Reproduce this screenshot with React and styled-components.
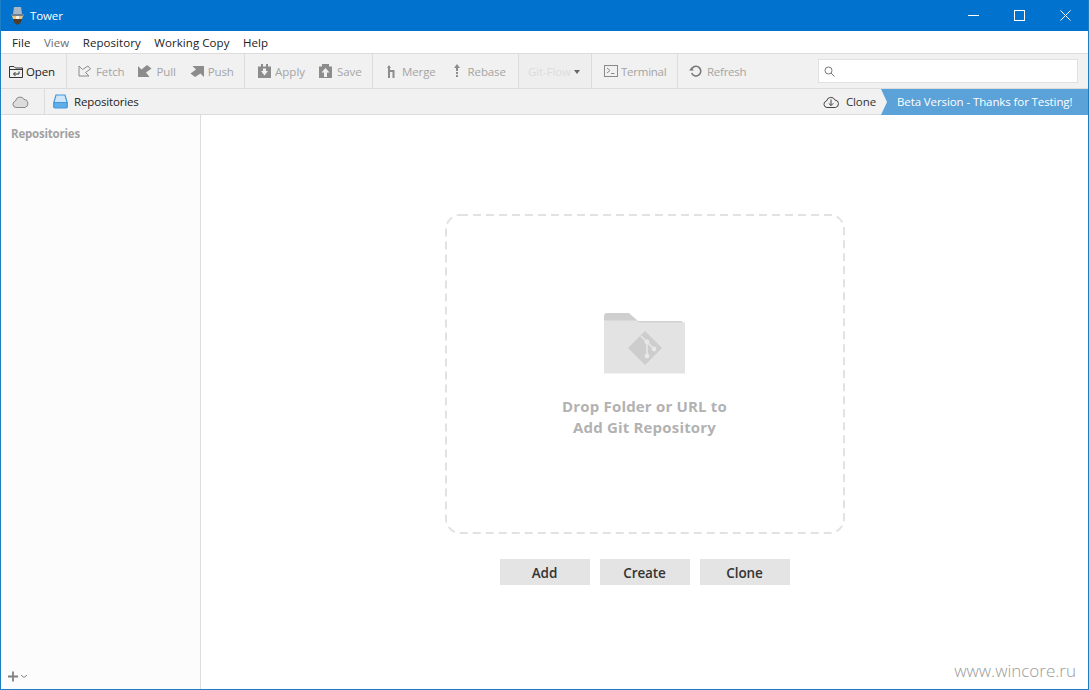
import React from "react";
import styled, { createGlobalStyle } from "styled-components";

const Global = createGlobalStyle`
  html, body { margin: 0; padding: 0; background: #fff; }
  body { font-family: "Open Sans", "Noto Sans", "Liberation Sans", sans-serif; }
  * { box-sizing: border-box; }
`;
const Window = styled.div`
  position: relative; width: 1089px; height: 690px; display: flex; flex-direction: column;
  border: 1px solid #1f7fc4; border-top: 0; overflow: hidden; background: #fff;
`;
const TitleBar = styled.div`
  flex: 0 0 31px; margin: 0 -1px; background: #0173cf; display: flex; align-items: center;
  padding-left: 10px; color: #fff;
`;
const TitleText = styled.span`
  font-size: 11.5px; margin-left: 5px; letter-spacing: -0.1px;
`;
const WindowButtons = styled.div`margin-left: auto; display: flex; height: 100%; padding-right: 1px;`;
const WindowButton = styled.div`width: 46px; display: flex; align-items: center; justify-content: center;`;
const MenuBar = styled.div`
  flex: 0 0 22px; display: flex; align-items: center; gap: 13.5px; padding-left: 11px; background: #fff;
`;
const MenuItem = styled.span`
  font-size: 11.5px; letter-spacing: 0.06px; color: ${p => (p.$dim ? "#6e6e6e" : "#222")};
`;
const Toolbar = styled.div`
  flex: 0 0 36px; display: flex; align-items: stretch; background: #f1f1f1;
  border-top: 1px solid #dcdcdc; border-bottom: 1px solid #dcdcdc;
`;
const Group = styled.div`
  display: flex; align-items: center; gap: ${p => p.$gap ?? 14}px; width: ${p => p.$w}px;
  padding-left: ${p => p.$pl}px; border-right: ${p => (p.$last ? "0" : "1px solid #dcdcdc")};
  background: ${p => (p.$flow ? "#eeeeee" : "transparent")};
`;
const Tool = styled.div`
  display: flex; align-items: center; gap: ${p => p.$gap ?? 4}px; font-size: 11.5px; letter-spacing: ${p => p.$ls ?? -0.12}px;
  color: ${p => (p.$on ? "#222" : p.$faint ? "#dcdcdc" : "#a4a4a4")}; white-space: nowrap;
`;
const Caret = styled.span`
  width: 0; height: 0; margin-left: -1px; margin-top: 1px;
  border-left: 3px solid transparent; border-right: 3px solid transparent; border-top: 4px solid #666;
`;
const Search = styled.div`
  margin: 5px 10px 5px auto; width: 260px; background: #fff; border: 1px solid #e0e0e0;
  display: flex; align-items: center; padding-left: 5px;
`;
const TabBar = styled.div`
  flex: 0 0 26px; display: flex; align-items: stretch; background: #f1f1f1; border-bottom: 1px solid #dcdcdc;
`;
const CloudTab = styled.div`
  width: 44px; border-right: 1px solid #dcdcdc; display: flex; align-items: center; padding-left: 11px;
`;
const RepoTab = styled.div`
  display: flex; align-items: center; gap: 6px; padding-left: 8px; font-size: 11.5px; letter-spacing: -0.15px; color: #222;
`;
const CloneTab = styled.div`
  margin-left: auto; display: flex; align-items: center; gap: 7px; padding-right: 5px;
  font-size: 11.5px; letter-spacing: -0.1px; color: #333;
`;
const Beta = styled.div`
  width: 207px; margin-bottom: -1px; background: #5aa2d8; color: #fff; font-size: 11.5px; letter-spacing: -0.1px;
  display: flex; align-items: center; padding: 0 0 2px 16px; white-space: nowrap;
  clip-path: polygon(0 0, 100% 0, 100% 100%, 0 100%, 6px 50%);
`;
const Body = styled.div`flex: 1; display: flex; min-height: 0;`;
const Sidebar = styled.div`
  width: 200px; background: #fcfcfc; border-right: 1px solid #dcdcdc; display: flex; flex-direction: column;
  padding: 11px 0 0 10px;
`;
const SideTitle = styled.div`font-size: 11.5px; font-weight: 700; color: #a2a2a2; letter-spacing: -0.2px;`;
const SideFooter = styled.div`margin-top: auto; display: flex; align-items: center; gap: 2px; padding: 0 0 7px 0;
  margin-left: -3px;`;
const Main = styled.div`
  flex: 1; display: flex; flex-direction: column; align-items: center; padding-top: 99px;
`;
const DropZone = styled.div`
  position: relative; width: 400px; height: 320px; display: flex; flex-direction: column; align-items: center;
  padding-top: 98px;
`;
const DashFrame = styled.svg`position: absolute; inset: 0; width: 100%; height: 100%;`;
const DropText = styled.div`
  margin-top: 22px; font-size: 15px; line-height: 21px; font-weight: 700; color: #b2b2b2; text-align: center;
  letter-spacing: 0.18px;
`;
const Buttons = styled.div`display: flex; gap: 10px; margin-top: 25px;`;
const Button = styled.div`
  width: 90px; height: 26px; background: #e4e4e4; display: flex; align-items: center; justify-content: center;
  padding-top: 2px; font-size: 13.5px; font-weight: 600; color: #333; letter-spacing: -0.1px;
`;
const Watermark = styled.div`
  position: absolute; right: 12px; bottom: 7px; font-size: 17px; color: #9a9a9a; letter-spacing: 0;
  font-family: "Open Sans", sans-serif; font-weight: 300;
`;

const G = "#8c8c8c";
const Logo = () => (
  <svg width="15" height="18" viewBox="0 0 15 18">
    <path d="M4 0h7l1 7H3z" fill="#a9b6c6" />
    <path d="M1 7h13v2H1z" fill="#6f7f92" />
    <path d="M2 9h11l-1 3H3z" fill="#e9c47c" />
    <path d="M6 9h3v3H6z" fill="#f8f1df" />
    <path d="M3 12h9l-1.500 4-3 2-3-2z" fill="#4e3d2a" />
  </svg>
);
const OpenIcon = () => (
  <svg width="14" height="13" viewBox="0 0 14 13" fill="none" stroke="#333">
    <path d="M.5 12.5v-11h4.500l1.500 1.500h7v9.500z" />
    <path d="M.5 4.500h13" />
    <path d="M10 6.500v2.500H4.500M6.500 7l-2 2 2 2" />
  </svg>
);
const FetchIcon = () => (
  <svg width="14" height="12" viewBox="0 0 14 12" fill="none" stroke={G} strokeWidth="1">
    <path d="M1 1v10h10L7.500 7.500l5-3.500L10 1 4.500 4.500z" />
  </svg>
);
const PullIcon = () => (
  <svg width="14" height="12" viewBox="0 0 14 12" fill={G}>
    <path d="M0 1l3.500 3.500L9 0l4.500 3.500L8 7.500 11.500 12H0z" />
  </svg>
);
const PushIcon = () => (
  <svg width="14" height="12" viewBox="0 0 14 12" fill={G}>
    <path d="M14 1v11l-3.500-3.500L5 12 .5 8.500 6 4.500 2.500 1z" />
  </svg>
);
const ApplyIcon = () => (
  <svg width="13" height="14" viewBox="0 0 13 14">
    <path fill={G} d="M0 2.500h3V0h2v2.500h3V0h2v2.500h3V14H0z" />
    <path fill="#f1f1f1" d="M5 4.500h3V7h2L6.500 11.500 3 7h2z" />
  </svg>
);
const SaveIcon = () => (
  <svg width="13" height="14" viewBox="0 0 13 14">
    <path fill={G} d="M0 2.500h3V0h7v2.500h3V14H0z" />
    <path fill="#f1f1f1" d="M6.500 4L10.500 8.500H8V13H5V8.500H2.500z" />
  </svg>
);
const MergeIcon = () => (
  <svg width="9" height="14" viewBox="0 0 9 14" fill="none" stroke={G} strokeWidth="2">
    <path d="M2 14V3" />
    <path d="M2 7h4.500V14" />
    <path d="M0 4l2-3 2 3z" fill={G} stroke="none" />
  </svg>
);
const RebaseIcon = () => (
  <svg width="6" height="14" viewBox="0 0 6 14" fill={G}>
    <path d="M3 0l3 4H4v3H2V4H0z" />
    <path d="M2 8h2v2H2zM2 11h2v2H2z" />
  </svg>
);
const TerminalIcon = () => (
  <svg width="14" height="12" viewBox="0 0 14 12" fill="none" stroke="#8a8a8a">
    <rect x=".5" y=".5" width="13" height="11" />
    <path d="M3 3l3 2.500L3 8M7 8.500h3.500" />
  </svg>
);
const RefreshIcon = () => (
  <svg width="14" height="13" viewBox="0 0 14 13" fill="none" stroke="#777" strokeWidth="1.600">
    <path d="M3.200 3.200A4.800 4.800 0 1 1 2.600 8" />
    <path d="M0 5.500l3-3.500 1.500 3.500z" fill="#777" stroke="none" />
  </svg>
);
const SearchIcon = () => (
  <svg width="11" height="11" viewBox="0 0 11 11" fill="none" stroke="#777">
    <circle cx="4.500" cy="4.500" r="3.500" />
    <path d="M7 7l3.500 3.500" />
  </svg>
);
const CloudIcon = () => (
  <svg width="17" height="13" viewBox="0 0 17 13" fill="#dcdcdc" stroke="#8a8a8a">
    <path d="M4 12.500a3.300 3.300 0 0 1-.5-6.500A4.600 4.600 0 0 1 12 4.300a4.200 4.200 0 0 1 1 8.200z" />
  </svg>
);
const RepoIcon = () => (
  <svg width="15" height="15" viewBox="0 0 15 15" fill="none" stroke="#3f97dd" strokeWidth="1.200">
    <path d="M3 1h9l2.300 8H.7z" fill="#cfe6f8" />
    <rect x=".7" y="8.500" width="13.600" height="5.500" rx="1.200" fill="#5eaee8" />
  </svg>
);
const CloneIcon = () => (
  <svg width="16" height="13" viewBox="0 0 16 13" fill="none" stroke="#444">
    <path d="M4 12.500a3.300 3.300 0 0 1-.5-6.500A4.500 4.500 0 0 1 12 5a3.800 3.800 0 0 1 .5 7.500z" />
    <path d="M8 4.500v6M5.700 8.300L8 10.600l2.300-2.300" />
  </svg>
);
const PlusMore = () => (
  <svg width="20" height="11" viewBox="0 0 20 11" fill="none" stroke="#808080">
    <path d="M5 .5v10M0 5.500h10" strokeWidth="1.800" />
    <path d="M13 4l3 2.500L19 4" strokeWidth="1" />
  </svg>
);
const FolderIcon = () => (
  <svg width="81" height="62" viewBox="0 0 81 62">
    <path d="M0 4a3 3 0 0 1 3-3h22l9 8h42a4 4 0 0 1 4 4v2H0z" fill="#cfcfcf" />
    <path d="M0 8.500h33l2.500 2H81V61.500H0z" fill="#e3e3e3" />
    <path d="M41 19l17 17-17 17-17-17z" fill="#cdcdcd" />
    <path d="M37 24l6 6v14M43 30l7 7" stroke="#e8e8e8" strokeWidth="1.500" fill="none" />
    <circle cx="43" cy="30" r="2.400" fill="#e8e8e8" />
    <circle cx="50" cy="37" r="2.400" fill="#e8e8e8" />
    <circle cx="43" cy="44" r="2.400" fill="#e8e8e8" />
  </svg>
);

export default function App() {
  return (
    <>
      <Global />
      <Window>
        <TitleBar>
          <Logo />
          <TitleText>Tower</TitleText>
          <WindowButtons>
            <WindowButton>
              <svg width="11" height="11" viewBox="0 0 11 11" stroke="#fff"><path d="M0 5.500h11" /></svg>
            </WindowButton>
            <WindowButton>
              <svg width="11" height="11" viewBox="0 0 11 11" stroke="#fff" fill="none"><rect x=".5" y=".5" width="10" height="10" /></svg>
            </WindowButton>
            <WindowButton>
              <svg width="11" height="11" viewBox="0 0 11 11" stroke="#fff"><path d="M.5.500l10 10M10.500.500l-10 10" /></svg>
            </WindowButton>
          </WindowButtons>
        </TitleBar>
        <MenuBar>
          <MenuItem>File</MenuItem>
          <MenuItem $dim>View</MenuItem>
          <MenuItem>Repository</MenuItem>
          <MenuItem>Working Copy</MenuItem>
          <MenuItem>Help</MenuItem>
        </MenuBar>
        <Toolbar>
          <Group $w={66} $pl={8}>
            <Tool $on $gap={3}><OpenIcon />Open</Tool>
          </Group>
          <Group $w={178} $pl={11}>
            <Tool><FetchIcon />Fetch</Tool>
            <Tool $gap={4}><PullIcon />Pull</Tool>
            <Tool $gap={4}><PushIcon />Push</Tool>
          </Group>
          <Group $w={128} $pl={13} $gap={14}>
            <Tool $ls={0.02}><ApplyIcon />Apply</Tool>
            <Tool $gap={5}><SaveIcon />Save</Tool>
          </Group>
          <Group $w={146} $pl={14} $gap={18}>
            <Tool $gap={6}><MergeIcon />Merge</Tool>
            <Tool $gap={8}><RebaseIcon />Rebase</Tool>
          </Group>
          <Group $w={73} $pl={9} $flow>
            <Tool $faint>Git-Flow<Caret /></Tool>
          </Group>
          <Group $w={86} $pl={12}>
            <Tool $gap={3} $ls={-0.25}><TerminalIcon />Terminal</Tool>
          </Group>
          <Group $w={130} $pl={11} $last>
            <Tool $gap={4} $ls={-0.25}><RefreshIcon />Refresh</Tool>
          </Group>
          <Search><SearchIcon /></Search>
        </Toolbar>
        <TabBar>
          <CloudTab><CloudIcon /></CloudTab>
          <RepoTab><RepoIcon />Repositories</RepoTab>
          <CloneTab><CloneIcon />Clone</CloneTab>
          <Beta>Beta Version - Thanks for Testing!</Beta>
        </TabBar>
        <Body>
          <Sidebar>
            <SideTitle>Repositories</SideTitle>
            <SideFooter><PlusMore /></SideFooter>
          </Sidebar>
          <Main>
            <DropZone>
              <DashFrame viewBox="0 0 400 320">
                <rect x="1" y="1" width="398" height="318" rx="14" fill="none" stroke="#e2e2e2" strokeWidth="2" strokeDasharray="8 5" />
              </DashFrame>
              <FolderIcon />
              <DropText>Drop Folder or URL to<br />Add Git Repository</DropText>
            </DropZone>
            <Buttons>
              <Button>Add</Button>
              <Button>Create</Button>
              <Button>Clone</Button>
            </Buttons>
          </Main>
        </Body>
        <Watermark>www.wincore.ru</Watermark>
      </Window>
    </>
  );
}
